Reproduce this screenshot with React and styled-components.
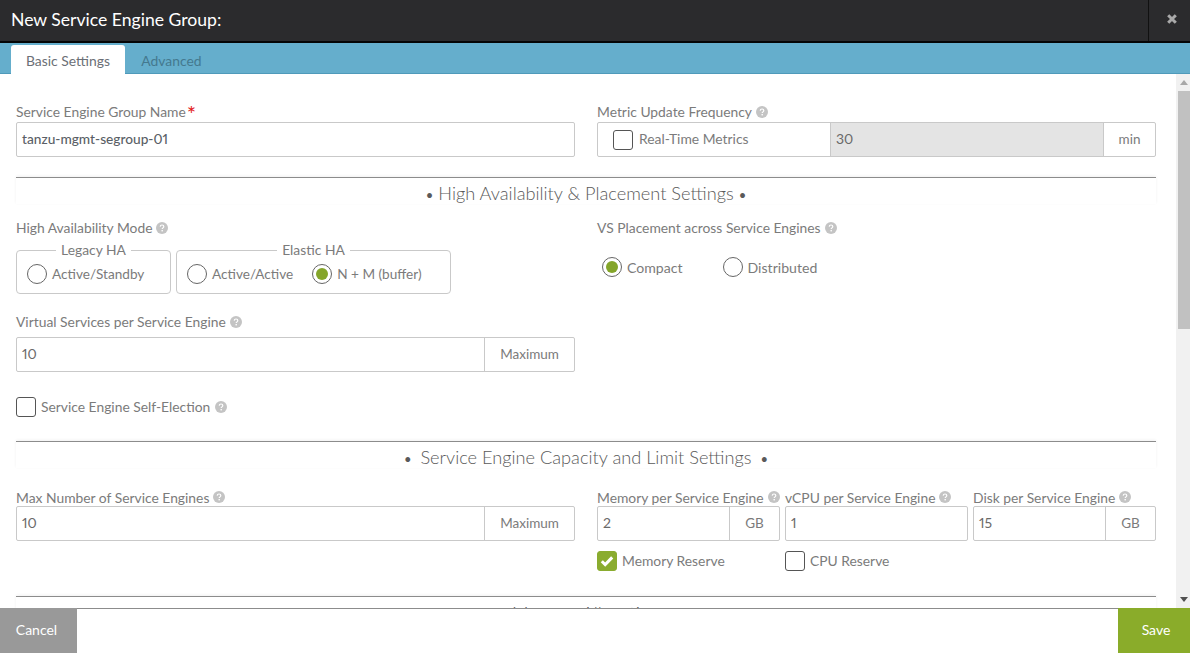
import React from 'react';
import styled, { createGlobalStyle } from 'styled-components';

const GlobalStyle = createGlobalStyle`
    html, body {
        margin: 0;
        padding: 0;
        overflow: hidden;
        background: #fff;
    }
    * {
        box-sizing: border-box;
    }
`
const Modal = styled.div`
    width: 1190px;
    height: 653px;
    display: flex;
    flex-direction: column;
    font-family: Lato, "Open Sans", sans-serif;
    color: #7b7b7b;
    font-size: 13.85px;
    overflow: hidden;
`
const Header = styled.div`
    height: 43px;
    flex: none;
    display: flex;
    align-items: center;
    justify-content: space-between;
    background: #2b2b2d;
    border-bottom: 2px solid #050505;
`
const Title = styled.h1`
    margin: 0 0 3px 11px;
    font-size: 17.6px;
    font-weight: 400;
    color: #fff;
`
const CloseBox = styled.div`
    width: 42px;
    height: 41px;
    display: flex;
    align-items: center;
    justify-content: center;
    border-left: 1px solid #111;
    padding: 0 0 3px 4px;
`
const Tabs = styled.div`
    height: 31px;
    flex: none;
    display: flex;
    align-items: flex-end;
    padding-left: 11px;
    background: #65aecc;
    border-bottom: 1px solid #4f9aba;
`
const Tab = styled.div`
    height: 29px;
    width: ${p => (p.$active ? '114px' : '92px')};
    margin-bottom: -1px;
    display: flex;
    align-items: center;
    justify-content: center;
    padding: 2px 0 0 ${p => (p.$active ? 0 : 1)}px;
    border-radius: 3px 3px 0 0;
    background: ${p => (p.$active ? '#fff' : 'transparent')};
    color: ${p => (p.$active ? '#6b6f76' : '#44798f')};
    font-size: 13.9px;
`
const Middle = styled.div`
    flex: 1;
    min-height: 0;
    display: flex;
`
const Content = styled.div`
    width: 1176px;
    overflow: hidden;
    padding: 30px 20px 0 16px;
`
const Row = styled.div`
    display: grid;
    grid-template-columns: 559px 559px;
    column-gap: 22px;
`
const Column = styled.div`
    display: flex;
    flex-direction: column;
`
const Label = styled.div`
    height: ${p => (p.$tight ? 16 : 18)}px;
    padding-bottom: ${p => (p.$tight ? 2 : 3)}px;
    margin-top: ${p => p.$top || 0}px;
    margin-bottom: ${p => p.$bottom || 0}px;
    display: flex;
    align-items: center;
    gap: 4px;
    white-space: nowrap;
`
const Required = styled.span`
    color: #e3211b;
    font-size: 22px;
    line-height: 20px;
    margin-left: -3px;
    align-self: flex-start;
`
const InputBox = styled.div`
    height: 35px;
    flex: none;
    display: flex;
    align-items: stretch;
    border: 1px solid #c9c9c9;
    border-radius: 2px;
    background: #fff;
`
const Value = styled.div`
    flex: 1;
    display: flex;
    align-items: center;
    padding: 0 0 2px 5px;
    font-size: ${p => (p.$strong ? '13.7px' : '14px')};
    font-variant-numeric: proportional-nums;
    color: ${p => (p.$strong ? '#5a5f66' : '#6a6a6a')};
    font-weight: ${p => (p.$strong ? 500 : 400)};
    background: ${p => (p.$disabled ? '#e4e4e4' : 'transparent')};
`
const Addon = styled.div`
    width: ${p => p.$width}px;
    flex: none;
    display: flex;
    align-items: center;
    justify-content: center;
    padding-bottom: 1px;
    border-left: 1px solid #c9c9c9;
    font-size: 13.5px;
`
const CheckAddon = styled.div`
    width: 233px;
    flex: none;
    display: flex;
    align-items: center;
    gap: 6px;
    padding-left: 15px;
    border-right: 1px solid #c9c9c9;
`
const CheckLine = styled.label`
    display: flex;
    align-items: center;
    gap: 5px;
    margin-top: ${p => p.$top || 0}px;
    width: ${p => (p.$width ? `${p.$width}px` : 'auto')};
`
const CheckText = styled.span`
    padding-bottom: 2px;
`
const Box = styled.span`
    width: 20px;
    height: 20px;
    flex: none;
    display: flex;
    align-items: center;
    justify-content: center;
    border-radius: 3px;
    border: 1px solid ${p => (p.$checked ? '#8aac2f' : '#555')};
    background: ${p => (p.$checked ? '#8aac2f' : '#fff')};
`
const SectionHead = styled.div`
    height: 27px;
    margin-top: ${p => p.$top}px;
    margin-bottom: ${p => p.$bottom}px;
    border-top: 1px solid #8c8c8c;
    box-shadow: 0 -1px 3px rgba(0, 0, 0, 0.06);
    display: flex;
    justify-content: center;
    align-items: baseline;
    gap: ${p => p.$gap}px;
    padding-top: ${p => p.$pad || 4}px;
    font-size: 18.2px;
    font-weight: 300;
    line-height: 22px;
    color: #5a5a5a;
    background: #fff;
`
const Bullet = styled.span`
    font-size: 13px;
    font-weight: 400;
`
const Fieldsets = styled.div`
    display: flex;
    gap: 5px;
    margin-top: 5px;
`
const Group = styled.fieldset`
    width: ${p => p.$width}px;
    height: 51px;
    margin: 0;
    padding: 0 10px 2px;
    display: flex;
    align-items: center;
    gap: 19px;
    border: 1px solid #c9c9c9;
    border-radius: 4px;
`
const Legend = styled.legend`
    margin: 0 auto;
    padding: 0 5px;
    line-height: 14px;
`
const RadioLine = styled.label`
    display: flex;
    align-items: center;
    gap: 5px;
    white-space: nowrap;
    font-size: ${p => (p.$large ? '14.1px' : '13.6px')};
`
const RadioDot = styled.span`
    width: 20px;
    height: 20px;
    flex: none;
    display: flex;
    align-items: center;
    justify-content: center;
    border-radius: 50%;
    border: 1px solid #666;
    &::after {
        content: '';
        display: ${p => (p.$on ? 'block' : 'none')};
        width: 12px;
        height: 12px;
        border-radius: 50%;
        background: #84a52a;
    }
`
const PlacementRow = styled.div`
    display: flex;
    gap: 40px;
    margin: 19px 0 0 5px;
`
const Triple = styled.div`
    display: flex;
    gap: 5px;
`
const TripleCol = styled.div`
    width: 183px;
    display: flex;
    flex-direction: column;
`
const ReserveRow = styled.div`
    display: flex;
    margin-top: 10px;
`
const Scrollbar = styled.div`
    width: 14px;
    flex: none;
    display: flex;
    flex-direction: column;
    background: #f1f1f1;
`
const ScrollArrow = styled.div`
    height: 17px;
    flex: none;
    display: flex;
    align-items: center;
    justify-content: center;
    padding-left: 2px;
`
const Thumb = styled.div`
    height: 238px;
    margin-left: 2px;
    background: #c1c1c1;
`
const ScrollRest = styled.div`
    flex: 1;
`
const Footer = styled.div`
    height: 45px;
    flex: none;
    display: flex;
    justify-content: space-between;
    border-top: 1px solid #8c8c8c;
    background: #fff;
`
const Button = styled.button`
    width: ${p => p.$width}px;
    height: 45px;
    margin-top: -1px;
    border: none;
    padding: 0 ${p => p.$right}px 2px ${p => p.$left}px;
    font-family: inherit;
    font-size: 14px;
    color: #fff;
    background: ${p => p.$bg};
`
const HelpIcon = styled.svg`
    flex: none;
`

const Help = () => (
    <HelpIcon width="12" height="12" viewBox="0 0 12 12">
        <circle cx="6" cy="6" r="6" fill="#c4c4c4" />
        <path d="M4.2 4.6C4.3 3.5 5 3 6 3c1.1 0 1.8.6 1.8 1.5 0 .7-.4 1-.9 1.4-.5.3-.7.6-.7 1.1" fill="none" stroke="#fff" strokeWidth="1.2" />
        <rect x="5.5" y="8" width="1.4" height="1.4" fill="#fff" />
    </HelpIcon>
)

const CheckBox = ({ checked }) => (
    <Box $checked={checked}>
        {checked && (
            <svg width="14" height="12" viewBox="0 0 14 12">
                <path d="M1.8 6.2 5.2 9.6 12.2 2.4" fill="none" stroke="#fff" strokeWidth="3" />
            </svg>
        )}
    </Box>
)

const Radio = ({ on, large, children }) => (
    <RadioLine $large={large}>
        <RadioDot $on={on} />
        {children}
    </RadioLine>
)

const App = () => (
    <Modal>
        <GlobalStyle />
        <Header>
            <Title>New Service Engine Group:</Title>
            <CloseBox>
                <svg width="10" height="10" viewBox="0 0 10 10">
                    <path d="M1.2 1.2 8.8 8.8M8.8 1.2 1.2 8.8" stroke="#a9a9a9" strokeWidth="3" />
                </svg>
            </CloseBox>
        </Header>
        <Tabs>
            <Tab $active>Basic Settings</Tab>
            <Tab>Advanced</Tab>
        </Tabs>
        <Middle>
            <Content>
                <Row>
                    <Column>
                        <Label>Service Engine Group Name<Required>*</Required></Label>
                        <InputBox><Value $strong>tanzu-mgmt-segroup-01</Value></InputBox>
                    </Column>
                    <Column>
                        <Label>Metric Update Frequency <Help /></Label>
                        <InputBox>
                            <CheckAddon><CheckBox /><CheckText>Real-Time Metrics</CheckText></CheckAddon>
                            <Value $disabled>30</Value>
                            <Addon $width={52}>min</Addon>
                        </InputBox>
                    </Column>
                </Row>
                <SectionHead $top={20} $bottom={16} $gap={5}>
                    <Bullet>•</Bullet>
                    <span>High Availability &amp; Placement Settings</span>
                    <Bullet>•</Bullet>
                </SectionHead>
                <Row>
                    <Column>
                        <Label>High Availability Mode <Help /></Label>
                        <Fieldsets>
                            <Group $width={155}>
                                <Legend>Legacy HA</Legend>
                                <Radio>Active/Standby</Radio>
                            </Group>
                            <Group $width={275}>
                                <Legend>Elastic HA</Legend>
                                <Radio>Active/Active</Radio>
                                <Radio on>N + M (buffer)</Radio>
                            </Group>
                        </Fieldsets>
                        <Label $top={20} $bottom={5}>Virtual Services per Service Engine <Help /></Label>
                        <InputBox>
                            <Value>10</Value>
                            <Addon $width={90}>Maximum</Addon>
                        </InputBox>
                        <CheckLine $top={25}>
                            <CheckBox /><CheckText>Service Engine Self-Election</CheckText> <Help />
                        </CheckLine>
                    </Column>
                    <Column>
                        <Label>VS Placement across Service Engines <Help /></Label>
                        <PlacementRow>
                            <Radio on large>Compact</Radio>
                            <Radio large>Distributed</Radio>
                        </PlacementRow>
                    </Column>
                </Row>
                <SectionHead $top={24} $bottom={22} $gap={9}>
                    <Bullet>•</Bullet>
                    <span>Service Engine Capacity and Limit Settings</span>
                    <Bullet>•</Bullet>
                </SectionHead>
                <Row>
                    <Column>
                        <Label $tight>Max Number of Service Engines <Help /></Label>
                        <InputBox>
                            <Value>10</Value>
                            <Addon $width={90}>Maximum</Addon>
                        </InputBox>
                    </Column>
                    <Column>
                        <Triple>
                            <TripleCol>
                                <Label $tight>Memory per Service Engine <Help /></Label>
                                <InputBox>
                                    <Value>2</Value>
                                    <Addon $width={50}>GB</Addon>
                                </InputBox>
                            </TripleCol>
                            <TripleCol>
                                <Label $tight>vCPU per Service Engine <Help /></Label>
                                <InputBox><Value>1</Value></InputBox>
                            </TripleCol>
                            <TripleCol>
                                <Label $tight>Disk per Service Engine <Help /></Label>
                                <InputBox>
                                    <Value>15</Value>
                                    <Addon $width={50}>GB</Addon>
                                </InputBox>
                            </TripleCol>
                        </Triple>
                        <ReserveRow>
                            <CheckLine $width={188}><CheckBox checked /><CheckText>Memory Reserve</CheckText></CheckLine>
                            <CheckLine><CheckBox /><CheckText>CPU Reserve</CheckText></CheckLine>
                        </ReserveRow>
                    </Column>
                </Row>
                <SectionHead $top={25} $bottom={0} $gap={5} $pad={5}>
                    <Bullet>•</Bullet>
                    <span>Memory Allocation</span>
                    <Bullet>•</Bullet>
                </SectionHead>
            </Content>
            <Scrollbar>
                <ScrollArrow>
                    <svg width="8" height="5" viewBox="0 0 8 5"><path d="M4 0 8 5H0Z" fill="#a8a8a8" /></svg>
                </ScrollArrow>
                <Thumb />
                <ScrollRest />
                <ScrollArrow>
                    <svg width="8" height="5" viewBox="0 0 8 5"><path d="M0 0H8L4 5Z" fill="#505050" /></svg>
                </ScrollArrow>
            </Scrollbar>
        </Middle>
        <Footer>
            <Button $width={77} $left={0} $right={4} $bg="#999">Cancel</Button>
            <Button $width={72} $left={4} $right={0} $bg="#8aac2a">Save</Button>
        </Footer>
    </Modal>
)

export default App
